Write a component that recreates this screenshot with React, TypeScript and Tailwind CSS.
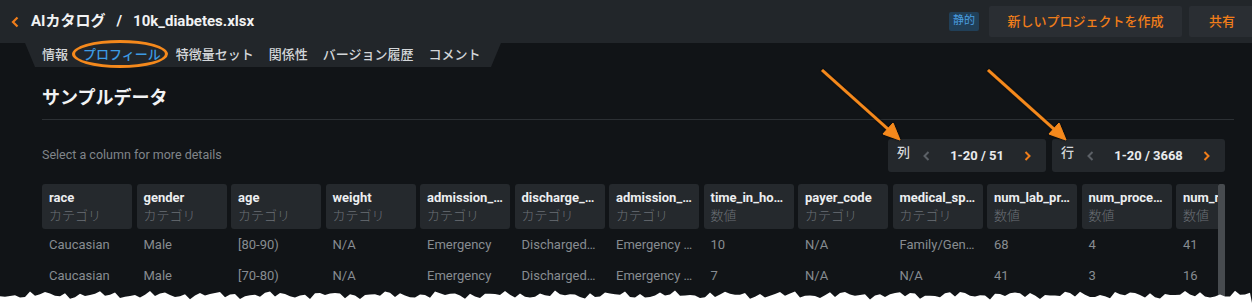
import React from 'react'

const columns = [
  { name: 'race', type: 'カテゴリ' },
  { name: 'gender', type: 'カテゴリ' },
  { name: 'age', type: 'カテゴリ' },
  { name: 'weight', type: 'カテゴリ' },
  { name: 'admission_…', type: 'カテゴリ' },
  { name: 'discharge_…', type: 'カテゴリ' },
  { name: 'admission_…', type: 'カテゴリ' },
  { name: 'time_in_ho…', type: '数値' },
  { name: 'payer_code', type: 'カテゴリ' },
  { name: 'medical_sp…', type: 'カテゴリ' },
  { name: 'num_lab_pr…', type: '数値' },
  { name: 'num_proce…', type: '数値' },
  { name: 'num_r', type: '数値' },
]

const rows = [
  ['Caucasian', 'Male', '[80-90)', 'N/A', 'Emergency', 'Discharged…', 'Emergency …', '10', 'N/A', 'Family/Gen…', '68', '4', '41'],
  ['Caucasian', 'Male', '[70-80)', 'N/A', 'Emergency', 'Discharged…', 'Emergency …', '7', 'N/A', 'N/A', '41', '3', '16'],
]

const tabs = ['情報', 'プロフィール', '特徴量セット', '関係性', 'バージョン履歴', 'コメント']

const Chevron = ({ dir, color }: { dir: 'left' | 'right'; color: string }) => (
  <svg width="7" height="10" viewBox="0 0 7 10">
    <polyline
      points={dir === 'left' ? '5.5,1 1.5,5 5.5,9' : '1.5,1 5.5,5 1.5,9'}
      fill="none"
      stroke={color}
      strokeWidth="2"
    />
  </svg>
)

const Pager = ({ label, text, width }: { label: string; text: string; width: string }) => (
  <div className={`flex items-center h-[33px] ${width} bg-[#24282c] rounded-[3px] pl-[9px] pr-[15px]`}>
    <span className="text-[13px] text-[#d5d8db] font-medium -mt-[6px]">{label}</span>
    <span className="ml-[13px]">
      <Chevron dir="left" color="#5b6066" />
    </span>
    <span className="flex-1 text-center text-[13px] font-bold text-[#e9ebed]">{text}</span>
    <Chevron dir="right" color="#f07d1a" />
  </div>
)

// torn paper edge along the bottom
const tornPoints = () => {
  const pts: string[] = ['0,303']
  for (let x = 0; x <= 1252; x += 5) {
    const y = 295 + Math.sin(x * 0.37) * 2 + Math.sin(x * 0.11) * 1.6 + Math.cos(x * 0.73) * 1.2
    pts.push(`${x},${y.toFixed(1)}`)
  }
  pts.push('1252,303')
  return pts.join(' ')
}

export default function App() {
  return (
    <div className="relative w-[1252px] h-[303px] overflow-hidden bg-[#111417] font-['Roboto','Noto_Sans_CJK_JP',sans-serif]">
      {/* Header */}
      <div className="flex items-center h-[43px] bg-[#22262a] pl-[11px]">
        <svg width="9" height="12" viewBox="0 0 9 12">
          <polyline points="6.5,1.5 2,6 6.5,10.5" fill="none" stroke="#f07d1a" strokeWidth="2.2" />
        </svg>
        <div className="ml-[11px] text-[15px] font-bold text-[#f1f2f3] flex items-center">
          <span>AIカタログ</span>
          <span className="mx-[11px]">/</span>
          <span>10k_diabetes.xlsx</span>
        </div>
        <div className="ml-auto flex items-center">
          <span className="h-[19px] px-[4px] flex items-center rounded-[2px] bg-[#213f57] text-[11px] text-[#4a9ee0]">静的</span>
          <button className="ml-[10px] h-[31px] w-[193px] rounded-[2px] bg-[#2a2e33] text-[13px] font-medium text-[#f07d1a]">
            新しいプロジェクトを作成
          </button>
          <button className="ml-[7px] h-[31px] w-[63px] rounded-l-[2px] bg-[#2a2e33] text-[13px] font-medium text-[#f07d1a] text-left pl-[20px]">
            共有
          </button>
        </div>
      </div>

      {/* Tabs */}
      <div className="flex h-[24px]">
        <div className="ml-[25px] w-[476px] h-full bg-[#22262a] [clip-path:polygon(0_0,100%_0,calc(100%-10px)_100%,10px_100%)] flex items-center gap-[15px] pl-[17px] text-[13px] font-medium text-[#d3d6d9]">
          {tabs.map((t) => (
            <span key={t} className={t === 'プロフィール' ? 'text-[#3d9be3]' : ''}>
              {t}
            </span>
          ))}
        </div>
      </div>

      {/* Content */}
      <div className="pl-[42px] pr-[18px]">
        <div className="pt-[19px] pb-[9px] border-b border-[#2c3034] text-[18px] font-bold text-[#f1f2f3] leading-[24px]">
          サンプルデータ
        </div>

        <div className="flex items-center mt-[19px] pr-[9px]">
          <span className="text-[12.5px] text-[#80858a]">Select a column for more details</span>
          <div className="ml-auto flex gap-[6px]">
            <Pager label="列" text="1-20 / 51" width="w-[158px]" />
            <Pager label="行" text="1-20 / 3668" width="w-[173px]" />
          </div>
        </div>

        {/* Table */}
        <div className="flex mt-[12px]">
          <div className="w-[1176px] overflow-hidden">
            <div className="grid grid-cols-[repeat(13,90px)] gap-x-[4.5px]">
              {columns.map((c, i) => (
                <div key={i} className="h-[45px] bg-[#25292d] rounded-[3px] pl-[7px] pt-[6px]">
                  <div className="text-[13px] font-bold text-[#eceef0] leading-[16px] whitespace-nowrap">{c.name}</div>
                  <div className="text-[13px] font-light text-[#6b7076] leading-[18px] mt-[1px] whitespace-nowrap">{c.type}</div>
                </div>
              ))}
              {rows.map((r, ri) =>
                r.map((v, ci) => (
                  <div key={`${ri}-${ci}`} className="h-[31px] flex items-center pl-[7px] text-[13px] text-[#878c91] whitespace-nowrap">
                    {v}
                  </div>
                ))
              )}
            </div>
          </div>
          <div className="w-[7px] h-[130px] bg-[#474b4f] rounded-[2px]" />
        </div>
      </div>

      {/* Annotation: circle around profile tab */}
      <div className="absolute left-[72px] top-[40px] w-[96px] h-[28px] rounded-[50%] border-[3px] border-[#f5891c]" />

      {/* Annotation arrows + torn edge */}
      <svg className="absolute inset-0 pointer-events-none" width="1252" height="303">
        <defs>
          <filter id="sh" x="-20%" y="-20%" width="140%" height="140%">
            <feDropShadow dx="0" dy="0" stdDeviation="1.5" floodColor="#000" floodOpacity="0.8" />
          </filter>
        </defs>
        <g filter="url(#sh)" fill="#f5891c" stroke="#f5891c">
          <line x1="822" y1="70" x2="889" y2="130" strokeWidth="3" />
          <polygon points="900,140 883,134 893,123" strokeWidth="1" />
          <line x1="988" y1="70" x2="1055" y2="130" strokeWidth="3" />
          <polygon points="1066,140 1049,134 1059,123" strokeWidth="1" />
        </g>
        <polygon points={tornPoints()} fill="#ffffff" />
      </svg>
    </div>
  )
}
